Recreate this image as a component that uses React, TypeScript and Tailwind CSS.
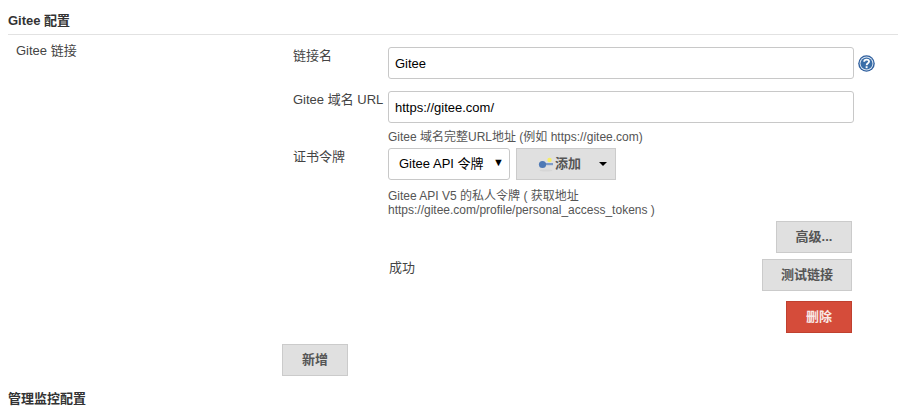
const FONT = "font-['Liberation_Sans','Noto_Sans_CJK_SC',sans-serif]";

function KeyIcon() {
  return (
    <svg className="w-[16px] h-[18px]" viewBox="0 0 16 18">
      <ellipse cx="8" cy="15.5" rx="6.5" ry="1" fill="#d6d6d6" />
      <circle cx="11.5" cy="5" r="2.2" fill="#f7ee6a" />
      <rect x="5" y="8" width="10" height="2.2" fill="#7d9cc9" />
      <circle cx="4.5" cy="9.5" r="3.6" fill="#4f7ab5" />
    </svg>
  );
}

function HelpIcon() {
  return (
    <svg className="w-[17px] h-[17px]" viewBox="0 0 16 16">
      <circle cx="8" cy="8" r="7.8" fill="#2f5f9e" />
      <circle cx="8" cy="8" r="6.5" fill="#dfe8f3" />
      <circle cx="8" cy="8" r="5.6" fill="#3a6ea8" />
      <path d="M5.8 6.4C5.8 3.6 10.4 3.6 10.4 6.2C10.4 7.8 8.1 7.9 8.1 9.6" fill="none" stroke="#fff" strokeWidth="1.7" />
      <rect x="7.2" y="10.6" width="1.8" height="1.8" fill="#fff" />
    </svg>
  );
}

function GrayButton({ label, className }: { label: string; className: string }) {
  return (
    <button className={`h-[32px] bg-[#e0e0e0] border border-[#cbcbcb] text-[13px] font-bold text-[#555] ${className}`}>
      {label}
    </button>
  );
}

export default function App() {
  return (
    <div className={`${FONT} w-[905px] h-[410px] overflow-hidden bg-white px-2 text-[13px] text-[#333]`}>
      {/* Gitee 配置 */}
      <div className="h-[35px] pt-[13px] leading-[16px] font-bold border-b border-[#e2e2e2] w-[890px]">Gitee 配置</div>

      <div className="flex mt-[12px]">
        <div className="w-[285px] shrink-0 pl-2 leading-[15px] -mt-[4px] text-[#444]">Gitee 链接</div>

        <div className="grid grid-cols-[95px_465px_auto] content-start">
          {/* 链接名 */}
          <div className="pt-[1px] leading-[16px] text-[#444]">链接名</div>
          <input
            readOnly
            defaultValue="Gitee"
            className="h-[32px] w-[466px] px-[6px] border border-[#c8c8c8] rounded-[3px] text-[13px] text-black outline-none"
          />
          <div className="pl-[5px] pt-[8px]">
            <HelpIcon />
          </div>

          {/* Gitee 域名 URL */}
          <div className="mt-[12px] pt-[1px] leading-[16px] text-[#444] whitespace-nowrap">Gitee 域名 URL</div>
          <div className="col-span-2 mt-[12px]">
            <input
              readOnly
              defaultValue="https://gitee.com/"
              className="h-[32px] w-[466px] px-[6px] border border-[#c8c8c8] rounded-[3px] text-[13px] text-black outline-none"
            />
            <div className="mt-[6px] text-[12px] leading-[16px] text-[#555]">Gitee 域名完整URL地址 (例如 https://gitee.com)</div>
          </div>

          {/* 证书令牌 */}
          <div className="mt-[2px] pt-[2px] leading-[16px] text-[#444]">证书令牌</div>
          <div className="col-span-2 mt-[3px]">
            <div className="flex gap-[6px]">
              <div className="relative w-[122px] h-[32px] border border-[#c8c8c8] rounded-[3px] pl-[10px] text-[13px] leading-[30px] text-black">
                Gitee API 令牌
                <span className="absolute right-[5px] top-[-2px] text-[11px] text-black">▼</span>
              </div>
              <button className="flex items-center w-[100px] h-[32px] bg-[#e0e0e0] border border-[#cbcbcb] pl-[21px] text-[13px] font-bold text-[#555]">
                <KeyIcon />
                <span className="ml-[1px]">添加</span>
                <span className="ml-[18px] border-x-[4px] border-x-transparent border-t-[4px] border-t-black" />
              </button>
            </div>
            <div className="mt-[9px] text-[12px] leading-[14px] text-[#555]">
              Gitee API V5 的私人令牌 ( 获取地址
              <br />
              https://gitee.com/profile/personal_access_tokens )
            </div>
          </div>
        </div>
      </div>

      {/* 按钮 */}
      <div className="ml-[380px] w-[464px] flex flex-col items-end">
        <GrayButton label="高级..." className="w-[76px] mt-[4px]" />
        <div className="flex w-full justify-between mt-[6px]">
          <div className="pl-[1px] pt-[1px] leading-[16px] text-[#444]">成功</div>
          <GrayButton label="测试链接" className="w-[90px]" />
        </div>
        <button className="w-[66px] h-[32px] mt-[10px] bg-[#d54c3a] border border-[#c0402f] text-[13px] font-bold text-[#f8e8e6]">
          删除
        </button>
      </div>

      <div className="pl-[274px] mt-[11px]">
        <GrayButton label="新增" className="w-[66px]" />
      </div>

      <div className="mt-[15px] leading-[16px] font-bold">管理监控配置</div>
    </div>
  );
}
